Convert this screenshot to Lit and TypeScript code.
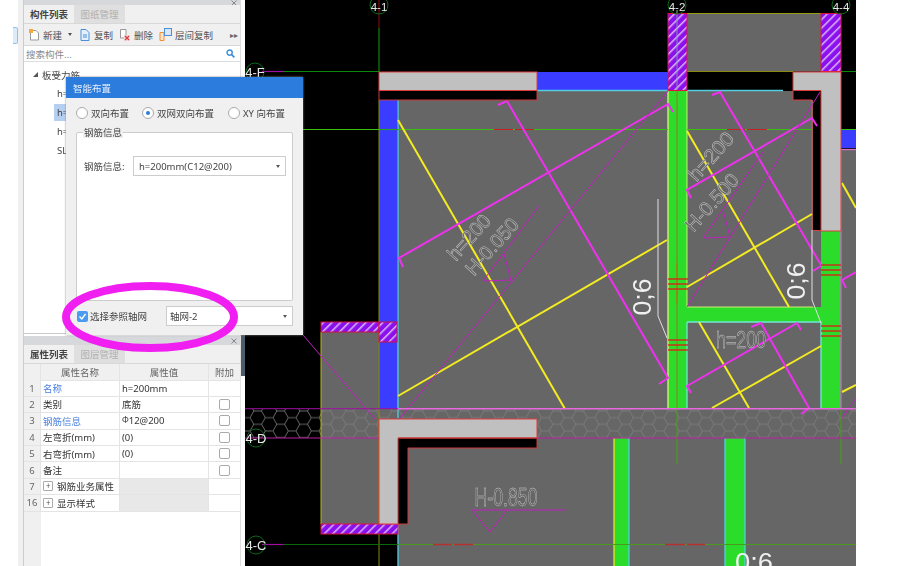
import { LitElement, html, svg, css } from "lit";
import { customElement } from "lit/decorators.js";

type L = [number, number, number, number];
const poly = (pts: number[][], cls: string) =>
  svg`<polyline class=${cls} fill="none" points=${pts.map((p) => p.join(",")).join(" ")}></polyline>`;
const ln = (l: L, cls: string) => svg`<line class=${cls} x1=${l[0]} y1=${l[1]} x2=${l[2]} y2=${l[3]}></line>`;

const YELLOW: L[] = [
  [398, 120, 565, 409],
  [398, 396, 667, 240],
  [687, 131, 789, 307],
  [687, 287, 812, 214],
  [699, 322, 749, 408],
  [712, 408, 821, 346],
  [842, 183, 856, 208],
  [842, 392, 856, 385],
];
const MAGENTA: number[][][] = [
  [[403, 267], [399, 258], [668, 104], [673, 112]],
  [[498, 105], [507, 101], [668, 378], [659, 384]],
  [[691, 393], [687, 386], [797, 323], [801, 330]],
  [[712, 95], [720, 92], [821, 265]],
  [[751, 327], [761, 323], [809, 408], [801, 414]],
  [[691, 198], [687, 190], [812, 118], [817, 126]],
  [[813, 271], [821, 266]],
  [[846, 288], [842, 280], [856, 272]],
];
const THIN: number[][][] = [
  [[400, 418], [668, 91]],
  [[539, 206], [483, 281], [511, 280], [504, 254]],
  [[687, 307], [820, 92]],
  [[763, 152], [703, 238], [730, 237], [723, 210]],
  [[303, 335], [375, 419]],
  [[842, 418], [856, 398]],
];
const RED_MARKS: [number, number][] = [
  [668, 279], [668, 284], [668, 289],
  [668, 340], [668, 345], [668, 350],
  [821, 265], [821, 270], [821, 275],
  [821, 326], [821, 331], [821, 336],
];
const AXES: [string, number, number, string, number][] = [
  ["4-1", 379, 5, "ax top", 10.5], ["4-2", 677, 5, "ax top", 10.5], ["4-4", 841, 5, "ax top", 10.5],
  ["4-F", 255, 72, "ax", 76.5], ["4-D", 256, 438, "ax", 442.5], ["4-C", 256, 545, "ax", 549.5],
];
const ROWS = [
  { n: "1", name: "名称", link: true, val: "h=200mm", box: false },
  { n: "2", name: "类别", val: "底筋", box: true },
  { n: "3", name: "钢筋信息", link: true, val: "Φ12@200", box: true },
  { n: "4", name: "左弯折(mm)", val: "(0)", box: true },
  { n: "5", name: "右弯折(mm)", val: "(0)", box: true },
  { n: "6", name: "备注", val: "", box: true },
  { n: "7", name: "钢筋业务属性", group: true },
  { n: "16", name: "显示样式", group: true },
];

const closeIcon = html`<svg width="6" height="6" viewBox="0 0 6 6"><path d="M.5 .5L5.5 5.5M5.5 .5L.5 5.5" stroke="#888" fill="none"/></svg>`;

@customElement("app-root")
export class AppRoot extends LitElement {
  static styles = css`
    :host {
      display: flex;
      position: relative;
      width: 916px;
      height: 566px;
      overflow: hidden;
      background: #fff;
      font-family: "Noto Sans", "Noto Sans CJK SC", sans-serif;
      font-size: 9.5px;
      color: #333;
    }
    .edge { width: 18px; flex: none; display: flex; justify-content: flex-end; align-items: flex-start; padding-top: 27px; box-sizing: border-box; }
    .edge i { width: 4px; height: 15px; border: 1px solid #8fc0ee; border-left: none; border-radius: 0 2px 2px 0; background: #dcebfa; }
    .gutter { width: 5px; flex: none; background: #f0f0f0; }
    .panels { width: 218px; flex: none; display: flex; flex-direction: column; border-left: 1px solid #ccc; border-right: 1px solid #ddd; box-sizing: border-box; filter: blur(.4px); }
    .sep { width: 4px; flex: none; background: linear-gradient(#fff 335px, #4d5c68 335px, #4d5c68 376px, #fff 376px); }
    .grip { background: #d6d8dc; display: flex; justify-content: flex-end; align-items: center; padding-right: 3px; overflow: hidden; }
    .top-panel { height: 333px; display: flex; flex-direction: column; background: #fff; border-bottom: 1px solid #ccc; }
    .top-panel .grip { height: 5px; }
    .tabs { height: 18px; display: flex; background: #f0f0f0; border-bottom: 1px solid #d8d8d8; }
    .tab { width: 50px; display: flex; align-items: center; justify-content: center; font-weight: 700; color: #444; }
    .tab.off { background: #dfdfdf; color: #b0b0b0; font-weight: 400; width: 51px; }
    .tools { height: 22px; display: flex; align-items: center; background: #f0f0f0; padding-left: 4px; border-bottom: 1px solid #d8d8d8; box-sizing: border-box; }
    .tool { display: flex; align-items: center; gap: 3px; margin-right: 6px; color: #555; }
    .tool svg { display: block; }
    .tool.copy { margin-left: 1px; }
    .tool.new i { margin-left: 3px; }
    .more { margin-left: auto; margin-right: 2px; color: #666; font-size: 8px; }
    .caret { width: 0; height: 0; border: 2.5px solid transparent; border-top: 3px solid #555; border-bottom: none; }
    .search { height: 15px; display: flex; align-items: center; justify-content: space-between; padding: 0 5px 0 2px; color: #888; border-bottom: 1px solid #ddd; }
    .tree { flex: 1; padding: 3px 0 0 9px; color: #444; }
    .node { height: 19px; display: flex; align-items: center; gap: 4px; }
    .tri { width: 0; height: 0; border-style: solid; border-width: 0 0 5px 5px; border-color: transparent transparent #555 transparent; }
    .leaf { height: 19px; display: flex; align-items: center; padding-left: 24px; }
    .leaf span { padding: 0 20px 0 3px; line-height: 17px; margin-left: -3px; }
    .leaf.sel span { background: #b5cff0; }
    .bot-panel { flex: 1; margin-top: 2px; display: flex; flex-direction: column; background: #fff; min-height: 0; }
    .bot-panel .grip { height: 9px; flex: none; }
    .grid { display: grid; grid-template-columns: 17px 79px 89px 32px; grid-auto-rows: 16.4px; flex: none; }
    .grid > div { display: flex; align-items: center; border-right: 1px solid #e4e4e4; border-bottom: 1px solid #e4e4e4; box-sizing: border-box; padding-left: 2px; min-width: 0; white-space: nowrap; }
    .grid .h { background: #f0f0f0; justify-content: center; color: #666; padding-left: 0; height: 17px; }
    .grid .idx { background: #f0f0f0; justify-content: center; padding-left: 0; color: #666; }
    .grid .blue { color: #4a80e0; }
    .grid .shade { background: #e8e8e8; }
    .grid .mid { justify-content: center; padding-left: 0; }
    .chk { width: 9px; height: 9px; border: 1px solid #aaa; border-radius: 2px; background: #fff; }
    .plus { width: 8px; height: 8px; border: 1px solid #aaa; border-radius: 1px; margin-right: 4px; display: flex; align-items: center; justify-content: center; font-size: 8px; line-height: 1; color: #555; flex: none; }
    .sym { font-size: 8px; position: relative; top: -1px; }
    .rest { flex: 1; display: flex; }
    .rest div { width: 17px; background: #f0f0f0; }
    .cad { display: block; flex: none; width: 611px; height: 566px; background: #000; filter: blur(.3px); }

    .dialog { position: absolute; left: 66px; top: 77px; width: 237px; height: 258px; background: #f0f0f0; box-shadow: 0 0 2px #888; display: flex; flex-direction: column; color: #444; filter: blur(.4px); }
    .title { height: 21px; flex: none; background: #2b7cdc; color: #e8f0fa; display: flex; align-items: center; padding-left: 7px; }
    .radios { height: 30px; flex: none; display: flex; align-items: center; padding: 0 0 0 10px; }
    .radio { display: flex; align-items: center; gap: 3px; }
    .radio i { width: 10px; height: 10px; border: 1px solid #aaa; border-radius: 50%; background: #fff; display: flex; align-items: center; justify-content: center; }
    .radio i b { width: 4px; height: 4px; border-radius: 50%; background: #2b7cdc; }
    .radio.second { margin-left: 13px; }
    .radio.third { margin-left: 14px; }
    .group { position: relative; margin: 4px 10px 0; height: 169px; background: #fff; border: 1px solid #ccc; border-radius: 2px; box-sizing: border-box; padding: 23px 6px 0 7px; display: flex; align-items: flex-start; }
    .legend { position: absolute; left: 6px; top: -6px; background: #f0f0f0; line-height: 11px; padding: 0 1px; }
    .field { display: flex; align-items: center; width: 100%; }
    .field span.lab { width: 49px; flex: none; }
    .select { height: 20px; border: 1px solid #ccc; box-sizing: border-box; background: #fff; display: flex; align-items: center; justify-content: space-between; padding: 0 5px 0 3px; }
    .field .select { flex: 1; padding-left: 5px; }
    .foot { flex: 1; display: flex; align-items: center; padding: 0 10px 4px 11px; }
    .cb { width: 11px; height: 11px; border-radius: 2px; background: #4a9af0; margin-right: 2px; flex: none; display: block; }
    .foot .select { width: 127px; margin-left: auto; }
    .ring { position: absolute; left: 55px; top: 277px; width: 190px; height: 80px; pointer-events: none; filter: blur(.4px); }

    .ax { fill: #e8e8e8; font: 13px "Liberation Sans", sans-serif; text-anchor: middle; }
    .ax.top { font-size: 11.5px; }
    .axc { fill: none; stroke: #0a6a1a; stroke-width: 1; }
    .y { stroke: #f4ec20; stroke-width: 2; }
    .m { stroke: #f030f0; stroke-width: 2; }
    .p { stroke: #c020c0; stroke-width: 1; }
    .w { stroke: #e0e0e0; stroke-width: 1; }
    .red { stroke: #e01818; stroke-width: 1.3; }
    .o { fill: #666; stroke: #cfcfcf; stroke-width: 0.45; font-family: "Liberation Sans", sans-serif; text-anchor: middle; }
    .big { fill: #f0f0f0; font-family: "Liberation Sans", sans-serif; text-anchor: middle; }
  `;

  private cad() {
    return svg`
      <defs>
        <pattern id="hex" width="23" height="13.3" patternUnits="userSpaceOnUse" patternTransform="translate(250 411)">
          <path d="M0 6.65 3.83 0H11.5L15.33 6.65 11.5 13.3H3.83ZM15.33 6.65H23" fill="none" stroke="#7e7e7e" stroke-width=".8"/>
        </pattern>
        <pattern id="hatch" width="6" height="6" patternUnits="userSpaceOnUse" patternTransform="rotate(45)">
          <rect width="6" height="6" fill="#8c10ec"/><rect width="1.5" height="6" fill="#d8b8ff"/>
        </pattern>
      </defs>
      <rect x="245" width="611" height="566" fill="#000"/>
      <g fill="#666">
        <rect x="687" y="13.5" width="134" height="58"/>
        <path d="M398 100H537V91H793V100H813V231H841V150H856V566H398Z"/>
        <rect x="321" y="322" width="77" height="202"/>
      </g>
      <path d="M398 438H537V448H408V524H398Z" fill="#000"/>
      <rect x="245" y="409" width="611" height="29" fill="url(#hex)"/>
      <g fill="#3a3cff">
        <rect x="379" y="100" width="18.5" height="309"/>
        <rect x="537" y="72" width="131" height="18.5"/>
        <rect x="841" y="130" width="15" height="18"/>
      </g>
      <path d="M668 91H687V307H821V231H841V408H821V322H687V408H668Z" fill="#2bdc2b"/>
      <rect x="614" y="438" width="15" height="128" fill="#2bdc2b"/>
      <rect x="725" y="438" width="20" height="128" fill="#2bdc2b"/>
      <g fill="none" stroke-width="1.3">
        <path d="M398 100V418M398 524V566" stroke="#50d0e0"/>
        <path d="M537 90.5H668M687 90.5H783" stroke="#50d0e0"/>
        <path d="M841 149.5H856" stroke="#e070d0"/>
        <path d="M841 150V408" stroke="#d060d0"/>
        <path d="M668 91V408" stroke="#e8f080"/>
        <path d="M687 91V307H813" stroke="#e8f080" stroke-width=".9"/>
        <path d="M687 322H821M687 322V408M821 322V408" stroke="#70e8d8"/>
        <path d="M614 438V566" stroke="#f0e020"/>
        <path d="M629 438V566M725 438V566M745 438V566" stroke="#50d0e0"/>
        <path d="M379 100V566" stroke="#8a8a10" stroke-width="1"/>
        <path d="M321 332V524" stroke="#b8b820" stroke-width="1"/>
        <path d="M687 13.5H821" stroke="#9a9a10" stroke-width="1"/>
        <path d="M687 71.5H793" stroke="#8a8a10" stroke-width="1"/>
      </g>
      <g fill="none" stroke-width="1.2">
        <path d="M262 71.5H283" stroke="#a010a0"/>
        <path d="M283 71.5H379M841 71.5H856" stroke="#0a8a0a"/>
        <path d="M245 129.5H379M398 129.5H668" stroke="#38c010"/>
        <path d="M379 129.5H398" stroke="#30a020"/>
        <path d="M687 129.5H813M841 129.5H856" stroke="#38c010"/>
        <path d="M494 129.5H513M515 129.5H534M727 129.5H745M747 129.5H767" stroke="#c82020"/>
        <path d="M262 544.5H283" stroke="#a010a0"/>
        <path d="M283 544.5H398" stroke="#0a6a0a"/>
        <path d="M398 544.5H856" stroke="#4a9a20"/>
        <path d="M433 544.5H452M454 544.5H473M665 544.5H685M687 544.5H705" stroke="#b83030" stroke-width="1.5"/>
        <path d="M379 0V28" stroke="#7a0a0a"/>
        <path d="M379 28V72" stroke="#0a8a0a"/>
        <path d="M677 10V91" stroke="#6a9a80"/>
        <path d="M677 91V408" stroke="#b06020" stroke-width=".8"/>
        <path d="M677 408V464M841 408V464" stroke="#4a9a20"/>
        <path d="M677 263V303" stroke="#a87a10"/>
        <path d="M812 100V230" stroke="#d85050"/>
      </g>
      ${YELLOW.map((l) => ln(l, "y"))}
      ${MAGENTA.map((p) => poly(p, "m"))}
      ${THIN.map((p) => poly(p, "p"))}
      ${RED_MARKS.map(([x, y]) => ln([x, y, x + 20, y], "red"))}
      <g fill="none" stroke-width="1">
        <path d="M245 408.7H398" stroke="#a010a0"/>
        <path d="M398 408.7H856" stroke="#e868e0" stroke-width="1.4"/>
        <path d="M245 438H379M537 438H856" stroke="#c01ca8"/>
      </g>
      <path d="M472 510H566M472 510L490 532 507 510" fill="none" class="p"/>
      ${poly([[658, 199], [658, 316], [667, 338]], "w")}
      ${poly([[812, 230], [812, 300], [821, 323]], "w")}
      <rect x="668" y="13.5" width="19" height="77" fill="url(#hatch)" stroke="#e0103c"/>
      <rect x="821" y="13.5" width="20" height="58" fill="url(#hatch)" stroke="#e0103c"/>
      <rect x="321" y="322" width="58" height="10" fill="url(#hatch)" stroke="#d01040"/>
      <rect x="379" y="322" width="18" height="20" fill="url(#hatch)" stroke="#d01040"/>
      <rect x="321" y="524" width="77" height="10" fill="url(#hatch)" stroke="#e0103c"/>
      <path d="M677 14V90" stroke="#80b0a0" stroke-width=".8"/>
      <g fill="#c0c0c0" stroke="#dc3c3c" stroke-width="1">
        <rect x="379" y="72" width="158" height="18.5"/>
        <path d="M379 419H537V438H398V524H379Z"/>
        <path d="M793 72H841V231H821V90.5H793Z"/>
      </g>
      <path d="M379 90.5V100H537V90.5M398 438H537V448H408V524H398" fill="none" stroke="#c83838"/>
      <path d="M793 90.5V100H812M813 230.5H821" fill="none" stroke="#dc3c3c"/>
      ${AXES.map(([t, x, y, cls, by]) => svg`
        <circle class="axc" cx=${x} cy=${y} r="9"></circle>
        <text class=${cls} x=${x} y=${by}>${t}</text>`)}
      <text class="o" font-size="20" textLength="54" lengthAdjust="spacingAndGlyphs" transform="translate(474 242) rotate(-48)">h=200</text>
      <text class="o" font-size="20" textLength="69" lengthAdjust="spacingAndGlyphs" transform="translate(497 251) rotate(-48)">H-0.050</text>
      <text class="o" font-size="20" textLength="58" lengthAdjust="spacingAndGlyphs" transform="translate(716 161) rotate(-48)">h=200</text>
      <text class="o" font-size="20" textLength="70" lengthAdjust="spacingAndGlyphs" transform="translate(717 207) rotate(-48)">H-0.500</text>
      <text class="o" x="741" y="348" font-size="24" textLength="50" lengthAdjust="spacingAndGlyphs">h=200</text>
      <text class="o" x="506" y="506" font-size="25" textLength="63" lengthAdjust="spacingAndGlyphs">H-0.850</text>
      <text class="big" font-size="26" textLength="37" lengthAdjust="spacingAndGlyphs" transform="translate(651 297) rotate(-90)">0;6</text>
      <text class="big" font-size="26" textLength="37" lengthAdjust="spacingAndGlyphs" transform="translate(805 281) rotate(-90)">0;6</text>
      <text class="big" x="754" y="571" font-size="26" textLength="38" lengthAdjust="spacingAndGlyphs">0:6</text>
    `;
  }

  render() {
    return html`
      <div class="edge"><i></i></div>
      <div class="gutter"></div>
      <div class="panels">
        <section class="top-panel">
          <div class="grip">${closeIcon}</div>
          <div class="tabs"><div class="tab">构件列表</div><div class="tab off">图纸管理</div></div>
          <div class="tools">
            <div class="tool new">
              <svg width="12" height="12" viewBox="0 0 12 12"><path d="M2.5 1.5H8L10.5 4V11H2.5Z" fill="#fff" stroke="#999"/><rect x="1" y="0" width="4" height="4" fill="#f5a83c"/></svg>
              <span>新建</span><i class="caret"></i>
            </div>
            <div class="tool copy">
              <svg width="12" height="12" viewBox="0 0 12 12"><path d="M2 .5H7L10 3.5V11.5H2Z" fill="#e4f0fb" stroke="#4a90d8"/><path d="M4 6H8M4 8H8" stroke="#4a90d8"/></svg>
              <span>复制</span>
            </div>
            <div class="tool">
              <svg width="12" height="12" viewBox="0 0 12 12"><path d="M1.5 .5H7V9H1.5Z" fill="#fff" stroke="#999"/><rect x="5" y="6" width="6" height="6" fill="#f4d8d8"/><path d="M6 7L10 11M10 7L6 11" stroke="#d83c3c" stroke-width="1.2"/></svg>
              <span>删除</span>
            </div>
            <div class="tool">
              <svg width="13" height="13" viewBox="0 0 13 13"><path d="M1 4.5H5V12.5H1Z" fill="#fde4cc" stroke="#f09030"/><rect x="5.5" y=".5" width="7" height="7" fill="#d8e8fa" stroke="#4a90d8"/></svg>
              <span>层间复制</span>
            </div>
            <span class="more">▸▸</span>
          </div>
          <div class="search">
            <span>搜索构件...</span>
            <svg width="9" height="9" viewBox="0 0 9 9"><circle cx="3.6" cy="3.6" r="2.6" fill="none" stroke="#3a8fd8" stroke-width="1.4"/><path d="M5.6 5.6L8.4 8.4" stroke="#3a8fd8" stroke-width="1.6"/></svg>
          </div>
          <div class="tree">
            <div class="node"><i class="tri"></i><span>板受力筋</span></div>
            <div class="leaf"><span>h=</span></div>
            <div class="leaf sel"><span>h=</span></div>
            <div class="leaf"><span>h=</span></div>
            <div class="leaf"><span>SL</span></div>
          </div>
        </section>
        <section class="bot-panel">
          <div class="grip">${closeIcon}</div>
          <div class="tabs"><div class="tab">属性列表</div><div class="tab off">图层管理</div></div>
          <div class="grid">
            <div class="h"></div><div class="h">属性名称</div><div class="h">属性值</div><div class="h">附加</div>
            ${ROWS.map((r) => html`
              <div class="idx">${r.n}</div>
              <div class=${r.link ? "blue" : ""}>
                ${r.group ? html`<i class="plus">+</i>` : ""}${r.name}
              </div>
              <div class=${r.group ? "shade" : ""}>
                ${r.val === "Φ12@200" ? html`<span class="sym">Φ</span>12@200` : r.val}
              </div>
              <div class="mid">${r.box ? html`<i class="chk"></i>` : ""}</div>`)}
          </div>
          <div class="rest"><div></div></div>
        </section>
      </div>
      <div class="sep"></div>
      <svg class="cad" viewBox="245 0 611 566">${this.cad()}</svg>

      <div class="dialog">
        <div class="title">智能布置</div>
        <div class="radios">
          <label class="radio"><i></i>双向布置</label>
          <label class="radio second"><i><b></b></i>双网双向布置</label>
          <label class="radio third"><i></i>XY 向布置</label>
        </div>
        <div class="group">
          <span class="legend">钢筋信息</span>
          <div class="field">
            <span class="lab">钢筋信息:</span>
            <div class="select"><span>h=200mm(C12@200)</span><i class="caret"></i></div>
          </div>
        </div>
        <div class="foot">
          <svg class="cb" viewBox="0 0 11 11"><path d="M2.5 5.5L4.8 8 8.5 3" fill="none" stroke="#fff" stroke-width="1.4"/></svg>
          <span>选择参照轴网</span>
          <div class="select"><span>轴网-2</span><i class="caret"></i></div>
        </div>
      </div>
      <svg class="ring" viewBox="0 0 190 80">
        <ellipse cx="95" cy="40" rx="84" ry="31" fill="none" stroke="#f01ef0" stroke-width="8"/>
      </svg>
    `;
  }
}
